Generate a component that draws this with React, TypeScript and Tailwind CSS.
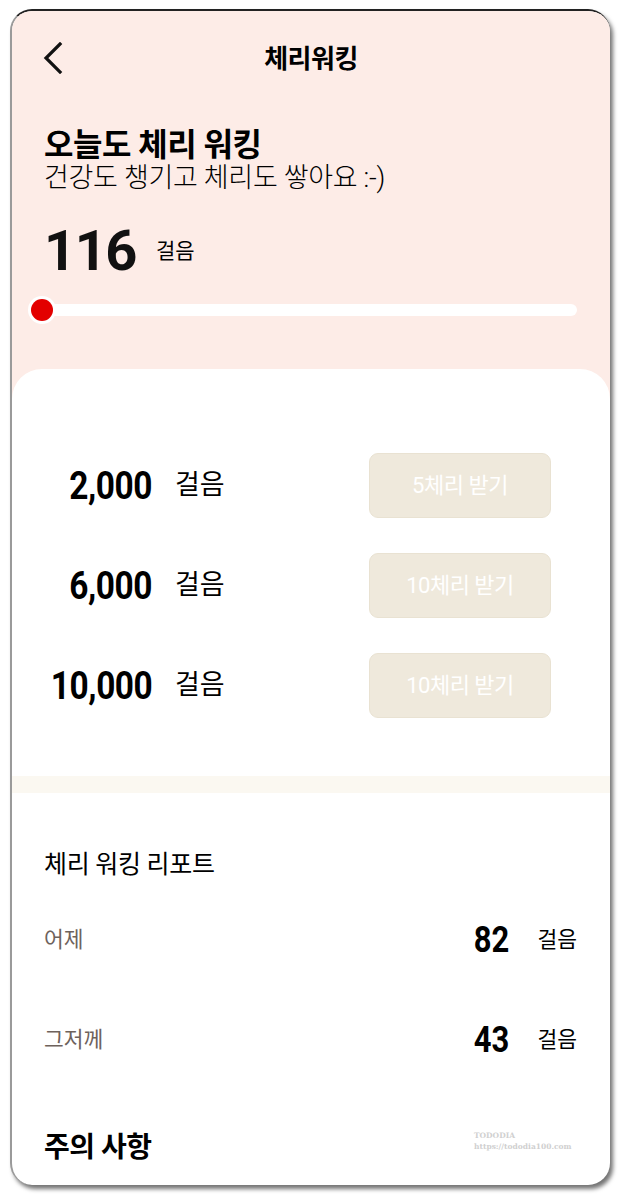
import React from "react";

const font = { fontFamily: '"Roboto", "Noto Sans CJK KR", sans-serif' };

function Reward({ steps, label }: { steps: string; label: string }) {
  return (
    <div className="flex items-center h-[65px]">
      <div className="w-[140px] text-right leading-none">
        <span className="inline-block origin-right scale-x-[0.88] text-[38px] font-bold text-black tracking-[-0.5px] leading-none">{steps}</span>
      </div>
      <div className="ml-[23px] text-[27px] text-black leading-none">걸음</div>
      <div className="ml-auto mr-[59px] w-[182px] h-[65px] rounded-[9px] bg-[#efe9dc] border border-[#e9e2d2] flex items-center justify-center text-[22px] text-white tracking-[-0.5px]">
        {label}
      </div>
    </div>
  );
}

function ReportRow({ day, steps }: { day: string; steps: string }) {
  return (
    <div className="flex items-center h-[40px] pl-[32px] pr-[33px]">
      <div className="text-[21.5px] text-[#6e625c]">{day}</div>
      <div className="ml-auto leading-none">
        <span className="inline-block origin-right scale-x-[0.86] text-[36px] font-bold text-black leading-none">{steps}</span>
      </div>
      <div className="ml-[28px] text-[21.5px] text-black leading-none">걸음</div>
    </div>
  );
}

export default function App() {
  return (
    <div className="w-[620px] h-[1195px] bg-white pt-[9px] pl-[10px]" style={font}>
      <div className="relative w-[600px] h-[1176px] rounded-[22px] overflow-hidden bg-white border-t-2 border-t-[#222] border-l-2 border-l-[#9a9a9a] shadow-[3px_4px_4px_rgba(0,0,0,0.55)]">
        {/* top pink section */}
        <div className="bg-[#fdece7] h-[392px]">
          <div className="relative h-[96px] flex items-center justify-center">
            <svg className="absolute left-[30px] top-[31px]" width="22" height="32" viewBox="0 0 22 32" fill="none">
              <path d="M18 2 L4 16 L18 30" stroke="#111" strokeWidth="3.2" strokeLinecap="square" />
            </svg>
            <div className="text-[26px] font-bold text-black tracking-[-0.5px]">체리워킹</div>
          </div>
          <div className="pl-[32px]">
            <div className="text-[32px] font-bold text-black leading-[36px] mt-[20px] tracking-[-0.5px]">오늘도 체리 워킹</div>
            <div className="text-[27px] font-light text-black leading-[30px] tracking-[-0.3px]">건강도 챙기고 체리도 쌓아요 :-)</div>
            <div className="flex items-center mt-[30px] h-[56px]">
              <div className="text-[56px] font-bold text-[#111] leading-none tracking-[-1.5px]">116</div>
              <div className="ml-[20px] text-[21px] text-black leading-none">걸음</div>
            </div>
          </div>
          <div className="relative mt-[25px] ml-[18px] mr-[33px] h-[12px] rounded-full bg-white">
            <div className="absolute left-[-2px] top-[-8px] w-[28px] h-[28px] rounded-full bg-white flex items-center justify-center">
              <div className="w-[22px] h-[22px] rounded-full bg-[#e30000]" />
            </div>
          </div>
        </div>
        {/* white card */}
        <div className="-mt-[34px] relative bg-white rounded-t-[30px] pt-[84px]">
          <div className="flex flex-col gap-[35px]">
            <Reward steps="2,000" label="5체리 받기" />
            <Reward steps="6,000" label="10체리 받기" />
            <Reward steps="10,000" label="10체리 받기" />
          </div>
          <div className="mt-[58px] h-[17px] bg-[#fbf8f1]" />
          <div className="pl-[32px] mt-[59px] text-[25px] text-black leading-none tracking-[-0.3px]">체리 워킹 리포트</div>
          <div className="mt-[43px] flex flex-col gap-[60px]">
            <ReportRow day="어제" steps="82" />
            <ReportRow day="그저께" steps="43" />
          </div>
          <div className="relative mt-[74px]">
            <div className="pl-[32px] text-[28px] font-bold text-black leading-none tracking-[-0.5px]">주의 사항</div>
            <div className="absolute left-[462px] top-[-4px] text-[7.5px] leading-[11px] text-[#d0d0d0] font-bold" style={{ fontFamily: '"DejaVu Serif", serif' }}>
              <div>TODODIA</div>
              <div>https://tododia100.com</div>
            </div>
          </div>
        </div>
      </div>
    </div>
  );
}
